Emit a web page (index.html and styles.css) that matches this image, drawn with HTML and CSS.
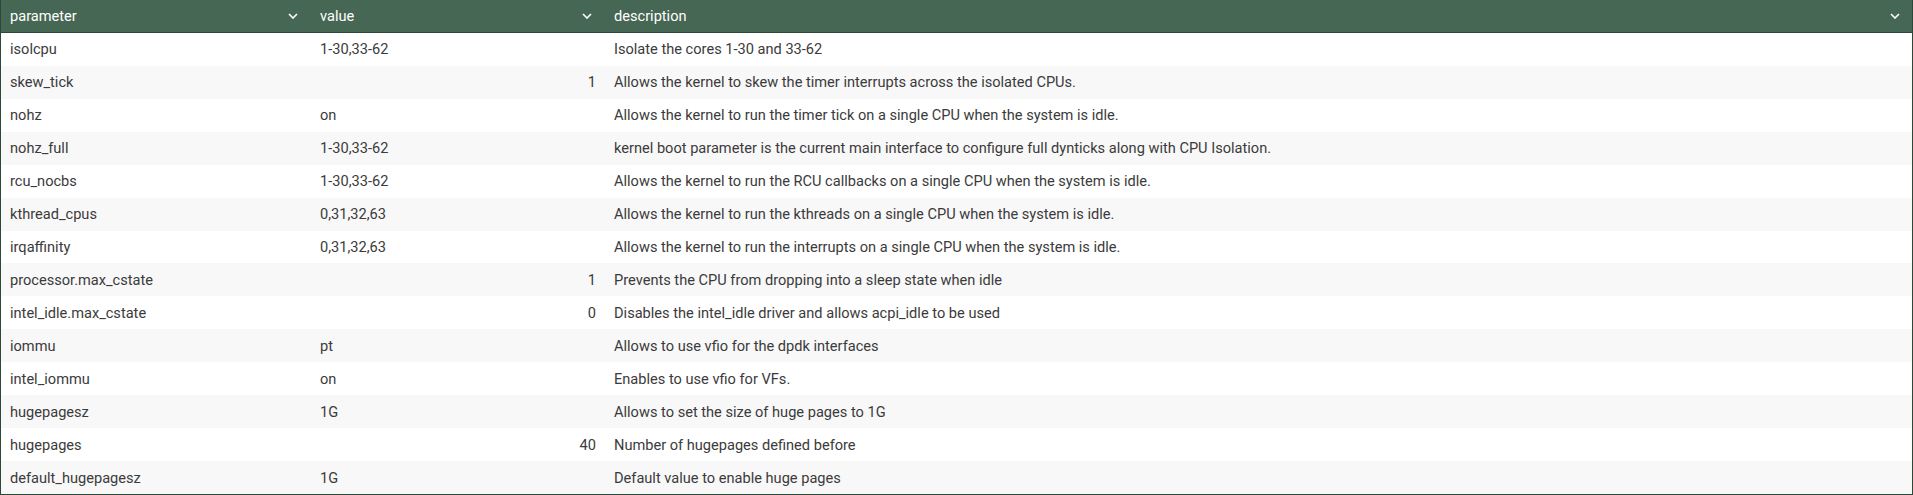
FILE: index.html
```html
<!DOCTYPE html>
<html>
<head>
<meta charset="utf-8">
<link rel="stylesheet" href="styles.css">
</head>
<body>
<div class="grid">
  <div class="head">
    <div class="hcell"><span>parameter</span><svg class="chev" viewBox="0 0 10 6"><path d="M1 1 L5 5 L9 1" /></svg></div>
    <div class="hcell"><span>value</span><svg class="chev" viewBox="0 0 10 6"><path d="M1 1 L5 5 L9 1" /></svg></div>
    <div class="hcell"><span>description</span><svg class="chev" viewBox="0 0 10 6"><path d="M1 1 L5 5 L9 1" /></svg></div>
  </div>
  <div class="body">
    <div class="row"><div class="c">isolcpu</div><div class="c">1-30,33-62</div><div class="c">Isolate the cores 1-30 and 33-62</div></div>
    <div class="row"><div class="c">skew_tick</div><div class="c num">1</div><div class="c">Allows the kernel to skew the timer interrupts across the isolated CPUs.</div></div>
    <div class="row"><div class="c">nohz</div><div class="c">on</div><div class="c">Allows the kernel to run the timer tick on a single CPU when the system is idle.</div></div>
    <div class="row"><div class="c">nohz_full</div><div class="c">1-30,33-62</div><div class="c">kernel boot parameter is the current main interface to configure full dynticks along with CPU Isolation.</div></div>
    <div class="row"><div class="c">rcu_nocbs</div><div class="c">1-30,33-62</div><div class="c">Allows the kernel to run the RCU callbacks on a single CPU when the system is idle.</div></div>
    <div class="row"><div class="c">kthread_cpus</div><div class="c">0,31,32,63</div><div class="c">Allows the kernel to run the kthreads on a single CPU when the system is idle.</div></div>
    <div class="row"><div class="c">irqaffinity</div><div class="c">0,31,32,63</div><div class="c">Allows the kernel to run the interrupts on a single CPU when the system is idle.</div></div>
    <div class="row"><div class="c">processor.max_cstate</div><div class="c num">1</div><div class="c">Prevents the CPU from dropping into a sleep state when idle</div></div>
    <div class="row"><div class="c">intel_idle.max_cstate</div><div class="c num">0</div><div class="c">Disables the intel_idle driver and allows acpi_idle to be used</div></div>
    <div class="row"><div class="c">iommu</div><div class="c">pt</div><div class="c">Allows to use vfio for the dpdk interfaces</div></div>
    <div class="row"><div class="c">intel_iommu</div><div class="c">on</div><div class="c">Enables to use vfio for VFs.</div></div>
    <div class="row"><div class="c">hugepagesz</div><div class="c">1G</div><div class="c">Allows to set the size of huge pages to 1G</div></div>
    <div class="row"><div class="c">hugepages</div><div class="c num">40</div><div class="c">Number of hugepages defined before</div></div>
    <div class="row"><div class="c">default_hugepagesz</div><div class="c">1G</div><div class="c">Default value to enable huge pages</div></div>
  </div>
</div>
</body>
</html>
```
FILE: styles.css
```css
html, body {
  margin: 0;
  padding: 0;
  background: #ffffff;
}
body {
  font-family: Roboto, "Liberation Sans", sans-serif;
  font-size: 14.6px;
  color: #3b3b3b;
}
.grid {
  width: 1913px;
  height: 495px;
  box-sizing: border-box;
  border: 1px solid #2c4838;
  border-top: none;
  display: flex;
  flex-direction: column;
}
.head {
  display: grid;
  grid-template-columns: 309px 294px 1fr;
  height: 32px;
  background: #466753;
  border-bottom: 1px solid #2c4838;
  color: #ffffff;
  font-weight: 400;
  flex: none;
}
.hcell {
  display: flex;
  align-items: center;
  justify-content: space-between;
  padding: 0 12px 0 10px;
}
.hcell:first-child {
  padding-left: 9px;
}
.chev {
  width: 10px;
  height: 6px;
  fill: none;
  stroke: #ffffff;
  stroke-width: 1.6;
}
.body {
  flex: 1;
  display: grid;
  grid-auto-rows: 1fr;
}
.row {
  display: grid;
  grid-template-columns: 309px 294px 1fr;
  align-items: center;
}
.row:nth-child(even) {
  background: #f8f8f8;
}
.c {
  padding: 0 10px;
  white-space: nowrap;
}
.c:first-child {
  padding-left: 9px;
}
.num {
  text-align: right;
  padding-right: 8px;
}
```
